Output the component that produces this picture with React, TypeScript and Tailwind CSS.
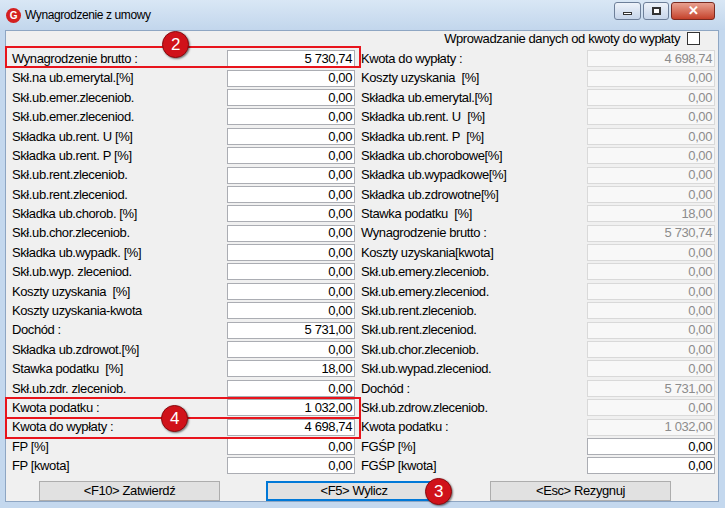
import React from "react";

const left: [string, string][] = [
  ["Wynagrodzenie brutto :", "5 730,74"],
  ["Skł.na ub.emerytal.[%]", "0,00"],
  ["Skł.ub.emer.zleceniob.", "0,00"],
  ["Skł.ub.emer.zleceniod.", "0,00"],
  ["Składka ub.rent. U [%]", "0,00"],
  ["Składka ub.rent. P [%]", "0,00"],
  ["Skł.ub.rent.zleceniob.", "0,00"],
  ["Skł.ub.rent.zleceniod.", "0,00"],
  ["Składka ub.chorob. [%]", "0,00"],
  ["Skł.ub.chor.zleceniob.", "0,00"],
  ["Składka ub.wypadk. [%]", "0,00"],
  ["Skł.ub.wyp. zleceniod.", "0,00"],
  ["Koszty uzyskania  [%]", "0,00"],
  ["Koszty uzyskania-kwota", "0,00"],
  ["Dochód :", "5 731,00"],
  ["Składka ub.zdrowot.[%]", "0,00"],
  ["Stawka podatku  [%]", "18,00"],
  ["Skł.ub.zdr. zleceniob.", "0,00"],
  ["Kwota podatku :", "1 032,00"],
  ["Kwota do wypłaty :", "4 698,74"],
  ["FP [%]", "0,00"],
  ["FP [kwota]", "0,00"],
];
const right: [string, string][] = [
  ["Kwota do wypłaty :", "4 698,74"],
  ["Koszty uzyskania  [%]", "0,00"],
  ["Składka ub.emerytal.[%]", "0,00"],
  ["Składka ub.rent. U  [%]", "0,00"],
  ["Składka ub.rent. P  [%]", "0,00"],
  ["Składka ub.chorobowe[%]", "0,00"],
  ["Składka ub.wypadkowe[%]", "0,00"],
  ["Składka ub.zdrowotne[%]", "0,00"],
  ["Stawka podatku  [%]", "18,00"],
  ["Wynagrodzenie brutto :", "5 730,74"],
  ["Koszty uzyskania[kwota]", "0,00"],
  ["Skł.ub.emery.zleceniob.", "0,00"],
  ["Skł.ub.emery.zleceniod.", "0,00"],
  ["Skł.ub.rent.zleceniob.", "0,00"],
  ["Skł.ub.rent.zleceniod.", "0,00"],
  ["Skł.ub.chor.zleceniob.", "0,00"],
  ["Skł.ub.wypad.zleceniod.", "0,00"],
  ["Dochód :", "5 731,00"],
  ["Skł.ub.zdrow.zleceniob.", "0,00"],
  ["Kwota podatku :", "1 032,00"],
  ["FGŚP [%]", "0,00"],
  ["FGŚP [kwota]", "0,00"],
];

const Badge = ({ n, cls }: { n: string; cls: string }) => (
  <div className={"absolute w-[27px] h-[27px] rounded-full bg-[#d0121a] border border-[#8a0a0f] text-white text-[17px] flex items-center justify-center shadow-[1px_1px_2px_rgba(0,0,0,0.5)] " + cls}>{n}</div>
);

function Row({ l, v, disabled, wide }: { l: string; v: string; disabled?: boolean; wide?: boolean }) {
  return (
    <div className="flex items-center h-[19.4px]">
      <div className={(wide ? "w-[232px]" : "w-[221px]") + " pl-[6px] whitespace-pre"}>{l}</div>
      <div className={"w-[128px] h-[17px] border flex items-center justify-end pr-[2px] " + (disabled ? "border-[#d9d9d9] bg-[#f8f8f8] text-[#8c8c8c]" : "border-[#abadb3] bg-white text-black")}>{v}</div>
    </div>
  );
}

export default function App() {
  return (
    <div className="w-[725px] h-[508px] bg-[#c4d8ee] relative text-[13px] text-black tracking-[-0.4px]" style={{ fontFamily: '"Liberation Sans", Arial, sans-serif' }}>
      <div className="h-[30px] flex items-center bg-gradient-to-b from-[#d9e7f5] to-[#c2d6ec]">
        <div className="ml-[6px] w-[15px] h-[15px] rounded-full bg-[#d42020] text-white text-[10px] font-bold flex items-center justify-center">G</div>
        <div className="ml-[4px] text-[12px]">Wynagrodzenie z umowy</div>
        <div className="ml-auto mr-[10px] flex gap-[2px] -mt-[8px]">
          <div className="w-[27px] h-[18px] rounded-[3px] border border-[#6d7f99] bg-gradient-to-b from-[#eef3fa] to-[#c6d5ea] flex items-center justify-center"><div className="w-[9px] h-[3px] border border-[#333] bg-white mt-[5px]" /></div>
          <div className="w-[26px] h-[18px] rounded-[3px] border border-[#6d7f99] bg-gradient-to-b from-[#eef3fa] to-[#c6d5ea] flex items-center justify-center"><div className="w-[9px] h-[8px] border-2 border-[#333] bg-white" /></div>
          <div className="w-[44px] h-[18px] rounded-[3px] border border-[#7a2a20] bg-gradient-to-b from-[#e8a090] to-[#c4402a] flex items-center justify-center text-white font-bold text-[13px]">✕</div>
        </div>
      </div>
      <div className="absolute left-[5px] right-[6px] top-[30px] bottom-[6px] bg-[#f0f0f0] border border-[#8ea6c3]">
        <div className="flex justify-end items-center h-[15px] pr-[18px] gap-[7px]">
          <span>Wprowadzanie danych od kwoty do wypłaty</span>
          <div className="w-[13px] h-[13px] border border-[#333] bg-white" />
        </div>
        <div className="flex mt-[3px]">
          <div className="w-[349px]">
            {left.map(([l, v], i) => <Row key={i} l={l} v={v} />)}
          </div>
          <div className="w-[362px]">
            {right.map(([l, v], i) => <Row key={i} l={l} v={v} disabled={i < 20} wide />)}
          </div>
        </div>
        <div className="flex mt-[5px] text-[13px]">
          <div className="ml-[33px] w-[181px] h-[20px] border border-[#adadad] bg-[#e1e1e1] flex items-center justify-center">&lt;F10&gt; Zatwierdź</div>
          <div className="ml-[46px] w-[176px] h-[20px] border-2 border-[#0078d7] bg-[#e1e1e1] flex items-center justify-center">&lt;F5&gt; Wylicz</div>
          <div className="ml-[48px] w-[181px] h-[20px] border border-[#adadad] bg-[#e1e1e1] flex items-center justify-center">&lt;Esc&gt; Rezygnuj</div>
        </div>
      </div>
      <div className="absolute left-[5px] top-[46px] w-[356px] h-[22px] border-2 border-[#e8141c]" />
      <div className="absolute left-[5px] top-[397px] w-[356px] h-[22px] border-2 border-[#e8141c]" />
      <div className="absolute left-[5px] top-[417px] w-[356px] h-[22px] border-2 border-[#e8141c]" />
      <Badge n="2" cls="left-[162px] top-[31px]" />
      <Badge n="4" cls="left-[161px] top-[405px]" />
      <Badge n="3" cls="left-[425px] top-[478px]" />
    </div>
  );
}
